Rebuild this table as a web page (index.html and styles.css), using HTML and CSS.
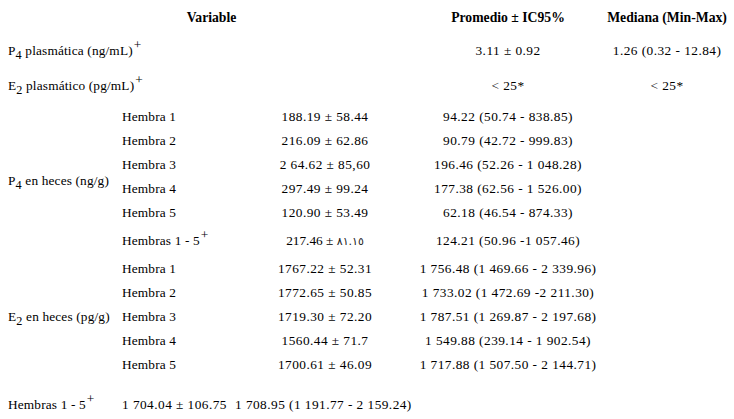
FILE: index.html
```html
<!DOCTYPE html>
<html lang="es">
<head>
<meta charset="utf-8">
<title>Concentraciones hormonales</title>
<link rel="stylesheet" href="styles.css">
</head>
<body>
<table class="data">
  <colgroup>
    <col class="c1"><col class="c2"><col class="c3"><col class="c4"><col class="c5">
  </colgroup>
  <tr class="r-head">
    <th colspan="3">Variable</th>
    <th>Promedio ± IC95%</th>
    <th>Mediana (Min-Max)</th>
  </tr>
  <tr class="r-p4">
    <td colspan="3" class="lbl">P<sub>4</sub> plasmática (ng/mL)<sup>+</sup></td>
    <td class="num">3.11 ± 0.92</td>
    <td class="num">1.26 (0.32 - 12.84)</td>
  </tr>
  <tr class="r-e2">
    <td colspan="3" class="lbl">E<sub>2</sub> plasmático (pg/mL)<sup>+</sup></td>
    <td class="num">&lt; 25*</td>
    <td class="num">&lt; 25*</td>
  </tr>
  <tr class="r-h">
    <td rowspan="6" class="lbl">P<sub>4</sub> en heces (ng/g)</td>
    <td class="lbl">Hembra 1</td>
    <td class="num">188.19 ± 58.44</td>
    <td class="num">94.22 (50.74 - 838.85)</td>
    <td></td>
  </tr>
  <tr class="r-h">
    <td class="lbl">Hembra 2</td>
    <td class="num">216.09 ± 62.86</td>
    <td class="num">90.79 (42.72 - 999.83)</td>
    <td></td>
  </tr>
  <tr class="r-h">
    <td class="lbl">Hembra 3</td>
    <td class="num">2 64.62 ± 85,60</td>
    <td class="num">196.46 (52.26 - 1 048.28)</td>
    <td></td>
  </tr>
  <tr class="r-h">
    <td class="lbl">Hembra 4</td>
    <td class="num">297.49 ± 99.24</td>
    <td class="num">177.38 (62.56 - 1 526.00)</td>
    <td></td>
  </tr>
  <tr class="r-h">
    <td class="lbl">Hembra 5</td>
    <td class="num">120.90 ± 53.49</td>
    <td class="num">62.18 (46.54 - 874.33)</td>
    <td></td>
  </tr>
  <tr class="r-hs">
    <td class="lbl">Hembras 1 - 5<sup>+</sup></td>
    <td class="num">217.46 ± <span class="ar">٨١.١٥</span></td>
    <td class="num">124.21 (50.96 -1 057.46)</td>
    <td></td>
  </tr>
  <tr class="r-h">
    <td rowspan="5" class="lbl">E<sub>2</sub> en heces (pg/g)</td>
    <td class="lbl">Hembra 1</td>
    <td class="num">1767.22 ± 52.31</td>
    <td class="num">1 756.48 (1 469.66 - 2 339.96)</td>
    <td></td>
  </tr>
  <tr class="r-h">
    <td class="lbl">Hembra 2</td>
    <td class="num">1772.65 ± 50.85</td>
    <td class="num">1 733.02 (1 472.69 -2 211.30)</td>
    <td></td>
  </tr>
  <tr class="r-h">
    <td class="lbl">Hembra 3</td>
    <td class="num">1719.30 ± 72.20</td>
    <td class="num">1 787.51 (1 269.87 - 2 197.68)</td>
    <td></td>
  </tr>
  <tr class="r-h">
    <td class="lbl">Hembra 4</td>
    <td class="num">1560.44 ± 71.7</td>
    <td class="num">1 549.88 (239.14 - 1 902.54)</td>
    <td></td>
  </tr>
  <tr class="r-h">
    <td class="lbl">Hembra 5</td>
    <td class="num">1700.61 ± 46.09</td>
    <td class="num">1 717.88 (1 507.50 - 2 144.71)</td>
    <td></td>
  </tr>
  <tr class="r-last">
    <td class="lbl">Hembras 1 - 5<sup>+</sup></td>
    <td class="num left">1 704.04 ± 106.75</td>
    <td class="num left">1 708.95 (1 191.77 - 2 159.24)</td>
    <td></td>
    <td></td>
  </tr>
</table>
</body>
</html>
```
FILE: styles.css
```css
html, body {
  margin: 0;
  padding: 0;
  background: #fff;
}

body {
  font-family: "Liberation Serif", "Times New Roman", serif;
  font-size: 13.33px;
  color: #000;
}

.data {
  margin-left: 7px;
  width: 727px;
  table-layout: fixed;
  border-collapse: collapse;
}

.c1 { width: 114px; }
.c2 { width: 113px; }
.c3 { width: 182px; }
.c4 { width: 184px; }
.c5 { width: 134px; }

.data th,
.data td {
  padding: 0 1px;
  vertical-align: middle;
  white-space: nowrap;
}

.data th {
  font-weight: bold;
  font-size: 13.7px;
  text-align: center;
}

.lbl {
  text-align: left;
  letter-spacing: 0.15px;
}

.num {
  text-align: center;
  letter-spacing: 0.45px;
}

.num.left {
  text-align: left;
}

sub, sup {
  line-height: 0;
}

sub {
  font-size: 92%;
  vertical-align: -4px;
}

sup {
  font-size: 100%;
  vertical-align: 6px;
  margin-left: 1px;
}

.ar {
  font-family: "DejaVu Sans", sans-serif;
  font-size: 11px;
  letter-spacing: 0.8px;
  color: #222;
}

.r-head { height: 35px; }
.r-p4 { height: 32px; }
.r-e2 { height: 38px; }
.r-h { height: 24px; }
.r-hs { height: 32px; }
.r-last { height: 42px; }

.r-last td {
  vertical-align: top;
  padding-top: 20px;
}
```
